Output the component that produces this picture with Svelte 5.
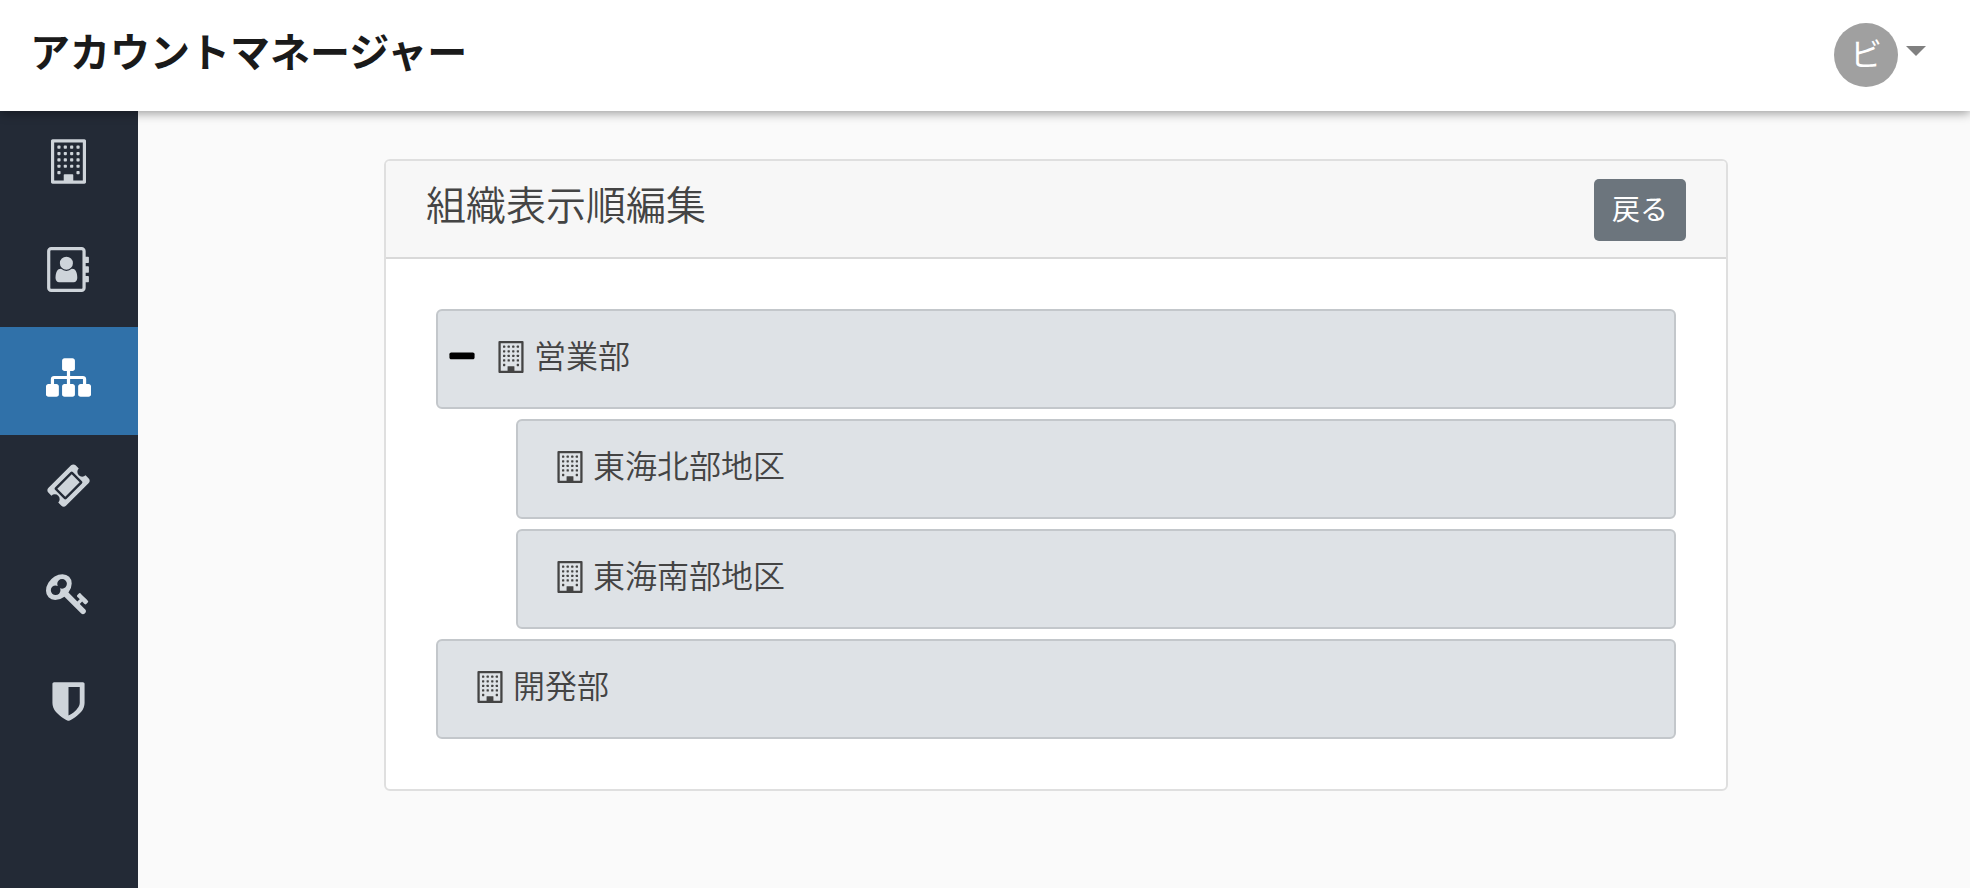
<script>
	const menu = [
		{
			label: '会社',
			box: '192 0 1408 1792',
			width: 35,
			icon: 'building'
		},
		{
			label: 'アカウント',
			box: '0 0 1664 1792',
			width: 42,
			path: 'M1028 644q0 107-76.5 183t-183.5 76-183.5-76-76.5-183q0-108 76.5-184t183.5-76 183.5 76 76.5 184zm-48 220q46 0 82.5 17t60 47.5 39.5 67 24 81 11.5 82.5 3.5 79q0 67-39.5 118.5t-105.5 51.5h-576q-66 0-105.5-51.5t-39.5-118.5q0-48 4.5-93.5t18.5-98.5 36.5-91.5 63-64.5 93.5-26h5q7 4 32 19.5t35.5 21 33 17 37 16 35 9 39.5 4.5 39.5-4.5 35-9 37-16 33-17 35.5-21 32-19.5zm684-256q0 13-9.5 22.5t-22.5 9.5h-96v128h96q13 0 22.5 9.5t9.5 22.5v192q0 13-9.5 22.5t-22.5 9.5h-96v128h96q13 0 22.5 9.5t9.5 22.5v192q0 13-9.5 22.5t-22.5 9.5h-96v224q0 66-47 113t-113 47h-1216q-66 0-113-47t-47-113v-1472q0-66 47-113t113-47h1216q66 0 113 47t47 113v224h96q13 0 22.5 9.5t9.5 22.5v192zm-256 1024v-1472q0-13-9.5-22.5t-22.5-9.5h-1216q-13 0-22.5 9.5t-9.5 22.5v1472q0 13 9.5 22.5t22.5 9.5h1216q13 0 22.5-9.5t9.5-22.5z'
		},
		{
			label: '組織',
			active: true,
			box: '0 0 1792 1792',
			width: 45,
			path: 'M1792 1248v320q0 40-28 68t-68 28h-320q-40 0-68-28t-28-68v-320q0-40 28-68t68-28h96v-192h-512v192h96q40 0 68 28t28 68v320q0 40-28 68t-68 28h-320q-40 0-68-28t-28-68v-320q0-40 28-68t68-28h96v-192h-512v192h96q40 0 68 28t28 68v320q0 40-28 68t-68 28h-320q-40 0-68-28t-28-68v-320q0-40 28-68t68-28h96v-192q0-52 38-90t90-38h512v-192h-96q-40 0-68-28t-28-68v-320q0-40 28-68t68-28h320q40 0 68 28t28 68v320q0 40-28 68t-68 28h-96v192h512q52 0 90 38t38 90v192h96q40 0 68 28t28 68z'
		},
		{
			label: 'チケット',
			box: '0 0 1792 1792',
			width: 45,
			path: 'M1024 452l316 316-572 572-316-316zm-211 979l618-618q19-19 19-45t-19-45l-362-362q-18-18-45-18t-45 18l-618 618q-19 19-19 45t19 45l362 362q18 18 45 18t45-18zm889-637l-907 908q-37 37-90.5 37t-90.5-37l-126-125q56-56 56-136t-56-136-136-56-136 56l-125-126q-37-37-37-90.5t37-90.5l907-906q37-37 90.5-37t90.5 37l125 125q-56 56-56 136t56 136 136 56 136-56l126 125q37 37 37 90.5t-37 90.5z'
		},
		{
			label: 'キー',
			box: '0 0 1792 1792',
			width: 45,
			path: 'M832 512q0-80-56-136t-136-56-136 56-56 136q0 42 19 83-41-19-83-19-80 0-136 56t-56 136 56 136 136 56 136-56 56-136q0-42-19-83 41 19 83 19 80 0 136-56t56-136zm851 704q0 17-49 66t-66 49q-9 0-28.5-16t-36.5-33-38.5-40-24.5-26l-96 96 220 220q28 28 28 68 0 42-39 81t-81 39q-40 0-68-28l-671-671q-176 131-365 131-163 0-265.5-102.5t-102.5-265.5q0-160 95-313t248-248 313-95q163 0 265.5 102.5t102.5 265.5q0 189-131 365l355 355 96-96q-3-3-26-24.5t-40-38.5-33-36.5-16-28.5q0-17 49-66t66-49q13 0 23 10 6 6 46 44.5t82 79.5 86.5 86 73 78 28.5 41z'
		},
		{
			label: 'セキュリティ',
			box: '0 0 1792 1792',
			width: 45,
			path: 'M1344 960v-640h-448v1137q119-63 213-137 235-184 235-360zm192-768v768q0 86-33.5 170.5t-83 150-118 127.5-126.5 103-121 77.5-89.5 49.5-42.5 20q-12 6-26 6t-26-6q-16-7-42.5-20t-89.5-49.5-121-77.5-126.5-103-118-127.5-83-150-33.5-170.5v-768q0-26 19-45t45-19h1152q26 0 45 19t19 45z'
		}
	];

	// windows of the building icon, the last row leaves room for the door
	const windows = [];
	for (let row = 0; row < 5; row++) {
		for (let col = 0; col < 4; col++) {
			if (row === 4 && (col === 1 || col === 2)) continue;
			windows.push({ x: 448 + col * 256, y: 256 + row * 256 });
		}
	}

	const organizations = [
		{ name: '営業部', children: [{ name: '東海北部地区' }, { name: '東海南部地区' }] },
		{ name: '開発部', children: [] }
	];

	let open = $state(true);
</script>

{#snippet building()}
	<path fill-rule="evenodd" d="M256 0h1280q26 0 45 19t19 45v1664q0 26-19 45t-45 19h-1280q-26 0-45-19t-19-45v-1664q0-26 19-45t45-19zM320 128v1536h384v-224q0-13 9.5-22.5t22.5-9.5h320q13 0 22.5 9.5t9.5 22.5v224h384v-1536z" />
	{#each windows as w}
		<rect x={w.x} y={w.y} width="128" height="128" rx="32" />
	{/each}
{/snippet}

{#snippet label(name)}
	<svg class="org-icon" viewBox="192 0 1408 1792" aria-hidden="true">{@render building()}</svg>
	<span>{name}</span>
{/snippet}

<div class="page">
	<header>
		<h1>アカウントマネージャー</h1>
		<button class="user" aria-label="ユーザーメニュー">
			<span class="avatar">ビ</span>
			<span class="caret"></span>
		</button>
	</header>

	<div class="content">
		<nav>
			{#each menu as item}
				<a href="#top" class:active={item.active} aria-label={item.label}>
					<svg viewBox={item.box} width={item.width} height="45" aria-hidden="true">
						{#if item.icon}
							{@render building()}
						{:else}
							<path d={item.path} />
						{/if}
					</svg>
				</a>
			{/each}
		</nav>

		<main>
			<section class="card">
				<div class="card-header">
					<h2>組織表示順編集</h2>
					<button class="back">戻る</button>
				</div>
				<ul class="tree">
					{#each organizations as org}
						<li>
							<div class="row" class:parent={org.children.length > 0}>
								{#if org.children.length > 0}
									<button class="toggle" aria-label="開閉" aria-expanded={open} onclick={() => (open = !open)}>
										<svg viewBox="192 0 1408 1792" aria-hidden="true">
											<path d="M1600 736v192q0 40-28 68t-68 28h-1216q-40 0-68-28t-28-68v-192q0-40 28-68t68-28h1216q40 0 68 28t28 68z" />
											{#if !open}
												<rect x="704" y="128" width="384" height="1408" rx="96" />
											{/if}
										</svg>
									</button>
								{/if}
								{@render label(org.name)}
							</div>
							{#if open && org.children.length > 0}
								<ul>
									{#each org.children as child}
										<li>
											<div class="row">{@render label(child.name)}</div>
										</li>
									{/each}
								</ul>
							{/if}
						</li>
					{/each}
				</ul>
			</section>
		</main>
	</div>
</div>

<style>
	:global(body) {
		background-color: #fafafa;
	}

	.page {
		display: flex;
		flex-direction: column;
		min-height: 100vh;
		color: #444;
		font-family: "Noto Sans CJK JP", sans-serif;
		font-weight: 350;
	}

	.page * {
		box-sizing: border-box;
	}

	h1, h2, ul {
		margin: 0;
		padding: 0;
	}

	ul {
		list-style: none;
	}

	button {
		padding: 0;
		border: none;
		background: none;
		font-family: inherit;
		cursor: pointer;
	}

	svg {
		display: block;
		fill: currentColor;
	}

	header {
		position: relative;
		z-index: 1;
		display: flex;
		justify-content: space-between;
		align-items: flex-start;
		height: 111px;
		padding: 23px 44px 0 30px;
		background-color: #fff;
		box-shadow: 0 2px 10px rgba(0, 0, 0, 0.4);
	}

	h1 {
		color: #1a1a1a;
		font-size: 40px;
		font-weight: 700;
		line-height: 54px;
	}

	.user {
		display: flex;
		align-items: center;
		gap: 8px;
	}

	.avatar {
		width: 64px;
		height: 64px;
		border-radius: 50%;
		background-color: #a0a0a0;
		color: #fff;
		font-size: 32px;
		font-weight: 400;
		line-height: 58px;
		text-align: center;
	}

	.caret {
		margin-bottom: 8px;
		border: 10px solid transparent;
		border-top-color: #808080;
		border-bottom: none;
	}

	.content {
		display: flex;
		flex: 1;
	}

	nav {
		flex-shrink: 0;
		width: 138px;
		background-color: #232a36;
	}

	nav a {
		display: flex;
		justify-content: center;
		height: 108px;
		padding: 28px 2px 0 0;
		color: #ced4da;
	}

	nav a.active {
		background-color: #3071a9;
		color: #fff;
	}

	main {
		flex: 1;
		padding: 48px 48px 48px 52px;
	}

	.card {
		max-width: 1344px;
		margin: 0 auto;
		border: 2px solid #dfdfdf;
		border-radius: 6px;
		background-color: #fff;
	}

	.card-header {
		display: flex;
		justify-content: space-between;
		align-items: flex-start;
		padding: 18px 40px 16px;
		border-bottom: 2px solid #d9d9d9;
		border-radius: 4px 4px 0 0;
		background-color: #f7f7f7;
	}

	h2 {
		font-size: 40px;
		font-weight: 350;
		line-height: 48px;
	}

	.back {
		height: 62px;
		padding: 0 18px 4px;
		border-radius: 5px;
		background-color: #6c757d;
		color: #fff;
		font-size: 28px;
	}

	.tree {
		padding: 50px;
	}

	li ul {
		padding-left: 80px;
	}

	li + li,
	li ul {
		margin-top: 10px;
	}

	.row {
		display: flex;
		align-items: flex-start;
		height: 100px;
		padding: 22px 39px;
		border: 2px solid #c3c7cb;
		border-radius: 6px;
		background-color: #dee2e6;
		font-size: 32px;
		line-height: 42px;
	}

	.parent {
		padding-left: 11px;
	}

	.org-icon {
		width: 26px;
		height: 32px;
		margin: 8px 10px 0 0;
	}

	.toggle {
		margin: 8px 23px 0 0;
		color: #000;
	}

	.toggle svg {
		width: 26px;
		height: 32px;
	}
</style>
